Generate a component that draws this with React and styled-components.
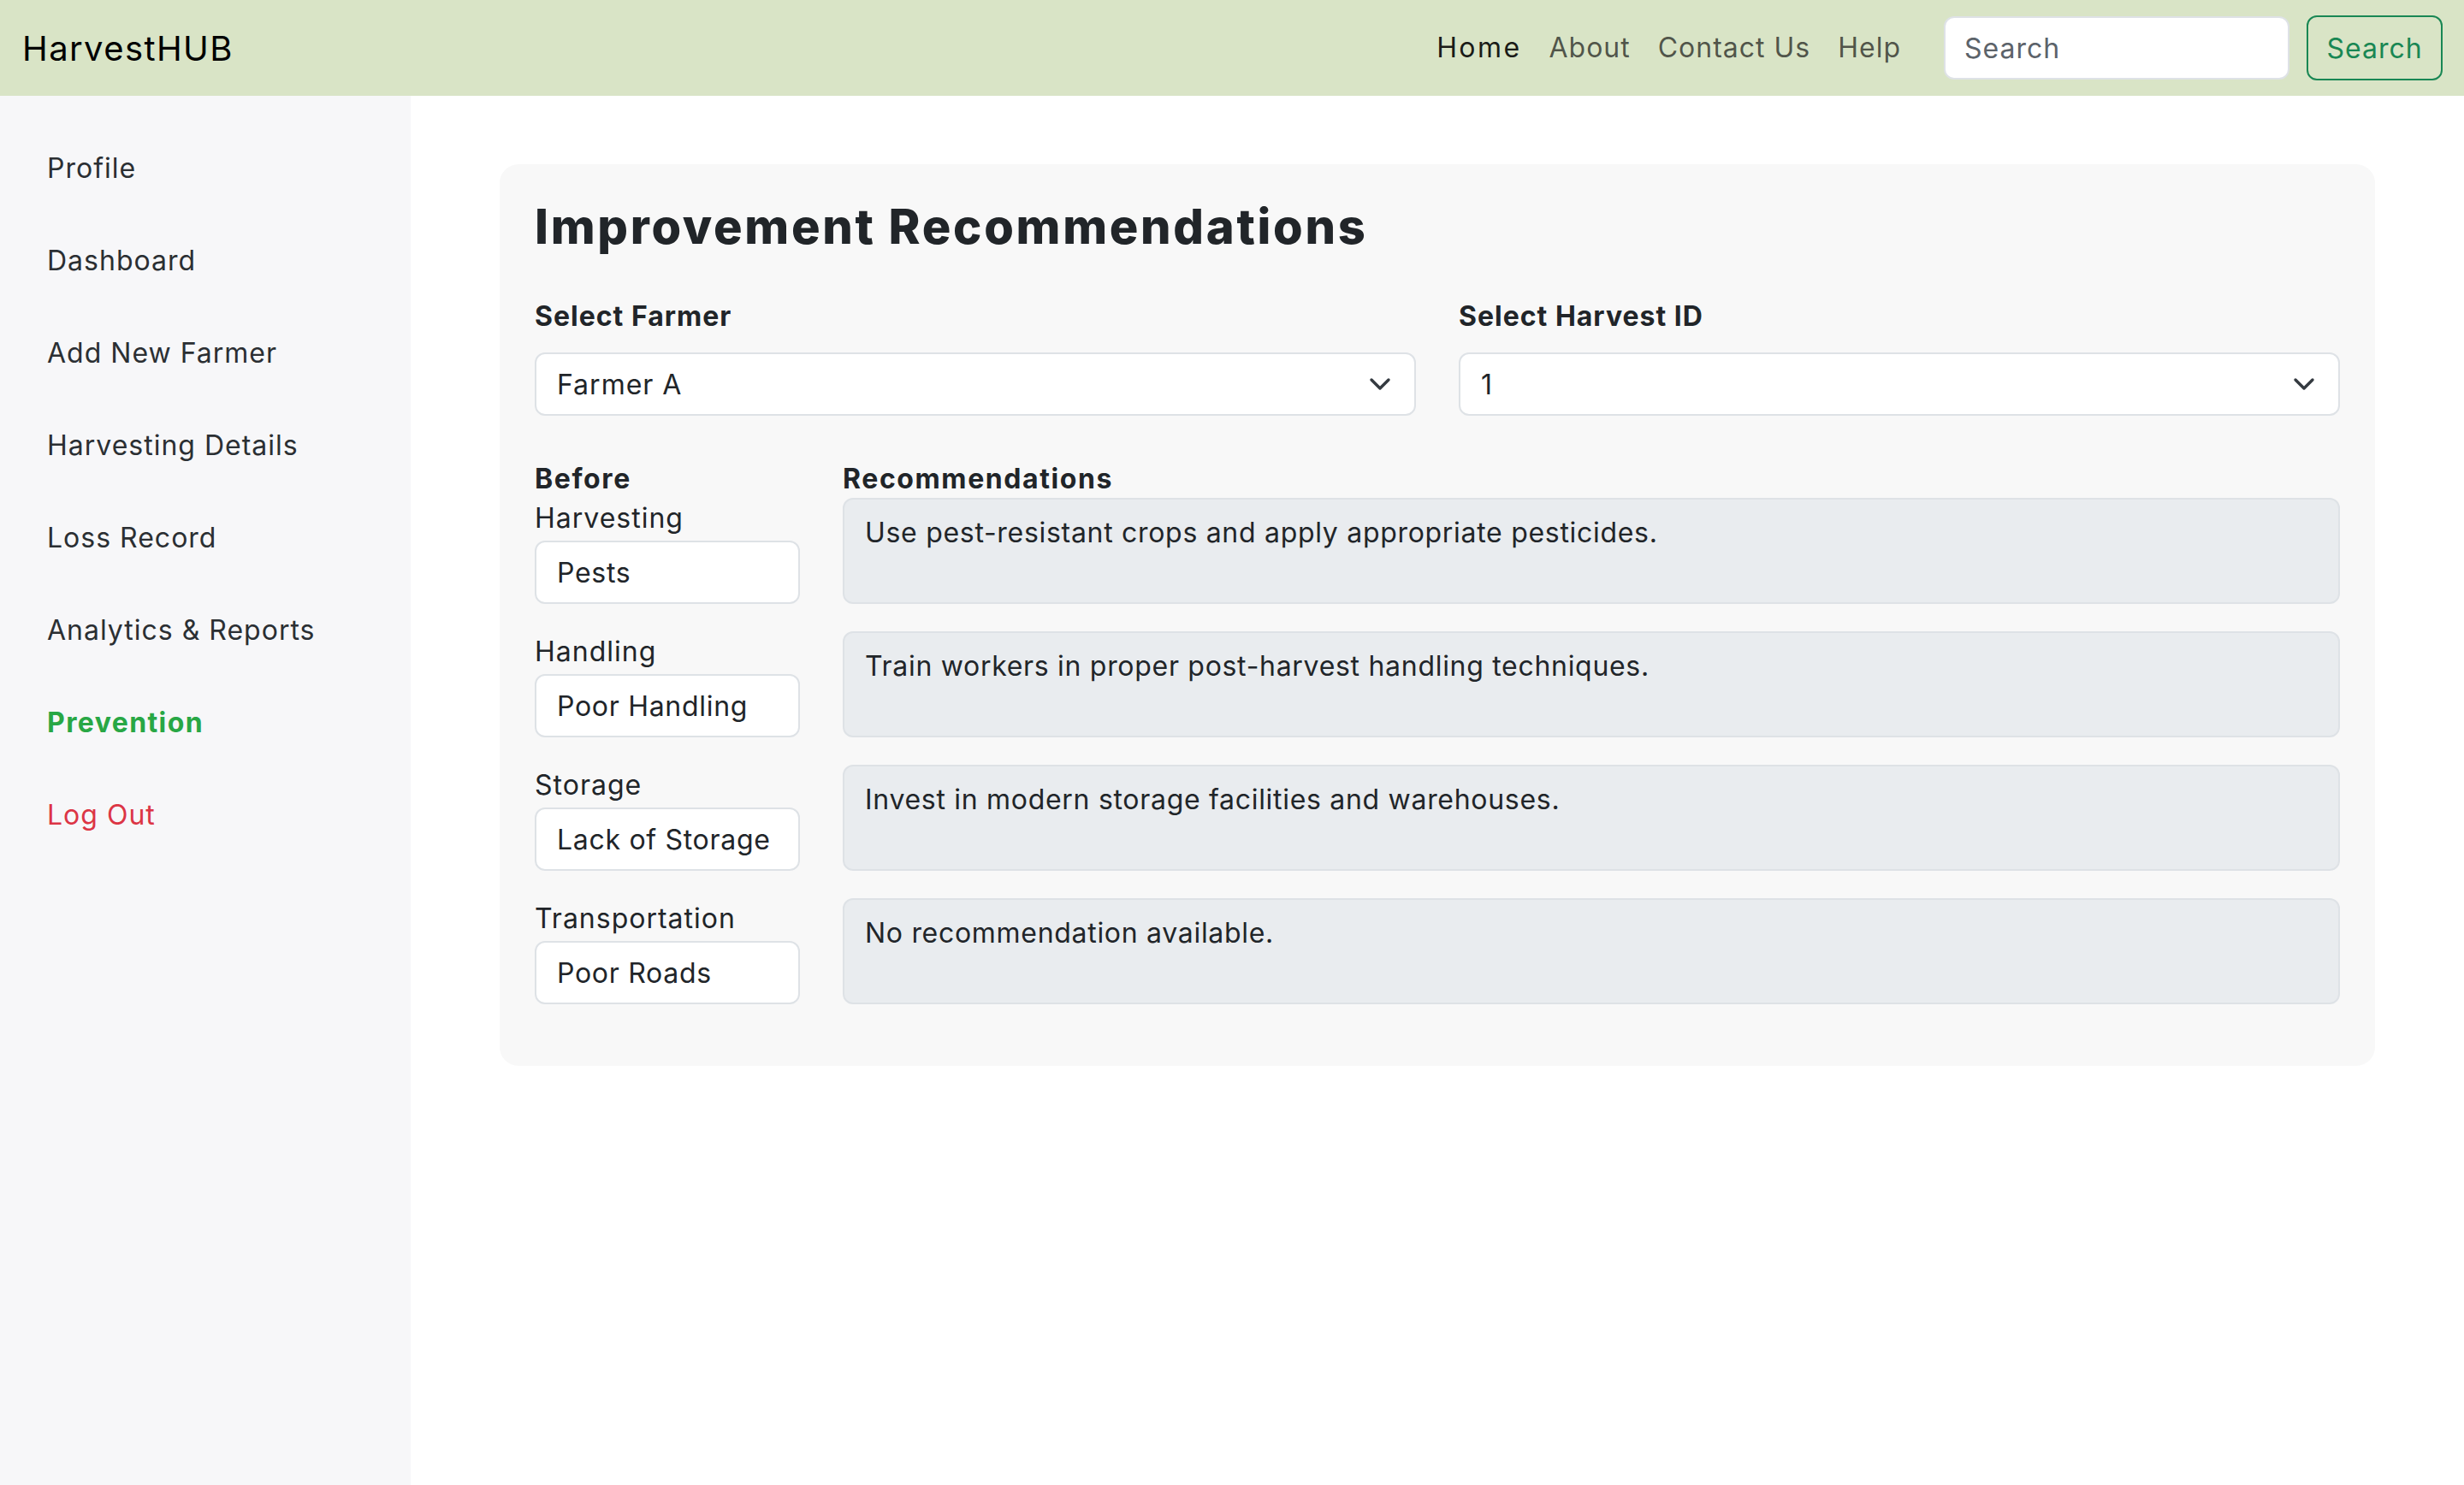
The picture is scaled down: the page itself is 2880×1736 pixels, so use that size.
import React from "react";
import styled, { createGlobalStyle } from "styled-components";

const GlobalStyle = createGlobalStyle`
  html, body { margin: 0; padding: 0; }
  body {
    font-family: Inter, "Open Sans", "Liberation Sans", sans-serif;
    color: #212529;
    background: #ffffff;
  }
  * { box-sizing: border-box; }
`;

const Page = styled.div`
  min-height: 100vh;
  display: flex;
  flex-direction: column;
`;

const Navbar = styled.header`
  height: 112px;
  flex: none;
  background: #d9e4c6;
  display: flex;
  align-items: center;
  justify-content: space-between;
  padding: 0 25px 0 26px;
`;

const Brand = styled.a`
  font-size: 40px;
  color: #000;
  text-decoration: none;
  letter-spacing: 1.4px;
`;

const NavRight = styled.div`
  display: flex;
  align-items: center;
`;

const NavList = styled.nav`
  display: flex;
  align-items: center;
`;

const NavLink = styled.a`
  font-size: 32px;
  line-height: 48px;
  padding: 0 16px;
  letter-spacing: ${(p) => (p.$active ? "2.4px" : "1px")};
  color: ${(p) => (p.$active ? "rgba(0,0,0,0.9)" : "rgba(0,0,0,0.65)")};
  text-decoration: none;
`;

const SearchForm = styled.form`
  display: flex;
  align-items: center;
  gap: 20px;
  margin-left: 34px;
`;

const SearchInput = styled.input`
  width: 404px;
  height: 74px;
  border: 2px solid #dee2e6;
  border-radius: 12px;
  background: #fff;
  padding: 0 22px;
  font-family: inherit;
  font-size: 32px;
  letter-spacing: 1px;
  color: #212529;
  outline: none;
  &::placeholder { color: #5c636a; }
`;

const OutlineButton = styled.button`
  height: 76px;
  width: 159px;
  border: 2px solid #198754;
  border-radius: 12px;
  background: transparent;
  color: #198754;
  font-family: inherit;
  font-size: 32px;
  letter-spacing: 1px;
  padding: 0;
`;

const Body = styled.div`
  flex: 1;
  display: flex;
`;

const Sidebar = styled.aside`
  width: 480px;
  flex: none;
  background: #f7f7f9;
  padding-top: 31px;
  display: flex;
  flex-direction: column;
`;

const SideItem = styled.a`
  display: block;
  padding: 30px 0 30px 55px;
  font-size: 32px;
  line-height: 48px;
  letter-spacing: ${(p) => (p.$active ? "1.4px" : "1px")};
  text-decoration: none;
  font-weight: ${(p) => (p.$active ? 700 : 400)};
  color: ${(p) =>
    p.$active ? "#28a745" : p.$danger ? "#dc3545" : "#2b2f33"};
`;

const Main = styled.main`
  flex: 1;
  padding: 80px 104px;
`;

const Card = styled.section`
  background: #f8f8f8;
  border-radius: 22px;
  padding: 40px 41px 72px;
`;

const Title = styled.h2`
  margin: 0 0 47px;
  font-size: 56px;
  line-height: 1.2;
  font-weight: 800;
  color: #212529;
  letter-spacing: 2.7px;
`;

const SelectRow = styled.div`
  display: grid;
  grid-template-columns: 1fr 1fr;
  column-gap: 50px;
  margin-bottom: 47px;
`;

const Field = styled.div`
  display: flex;
  flex-direction: column;
`;

const FieldLabel = styled.label`
  font-size: 32px;
  line-height: 48px;
  font-weight: 700;
  margin-bottom: 18px;
  letter-spacing: 1px;
`;

const SelectBox = styled.div`
  height: 74px;
  border: 2px solid #dee2e6;
  border-radius: 12px;
  background: #fff;
  display: flex;
  align-items: center;
  justify-content: space-between;
  padding: 0 24px 0 24px;
  font-size: 32px;
  letter-spacing: 1px;
  color: #212529;
`;

const Chevron = () => (
  <svg width="32" height="24" viewBox="0 0 16 12" aria-hidden="true">
    <path
      d="M3 3.5l5 5 5-5"
      fill="none"
      stroke="#343a40"
      strokeWidth="1.7"
      strokeLinecap="round"
      strokeLinejoin="round"
    />
  </svg>
);

const LossGrid = styled.div`
  display: grid;
  grid-template-columns: 310px 1fr;
  column-gap: 50px;
  row-gap: 32px;
`;

const ColHead = styled.div`
  font-size: 32px;
  line-height: 48px;
  font-weight: 700;
  letter-spacing: 1.6px;
  padding-top: 3px;
  margin-bottom: -34px;
`;

const Stage = styled.div`
  display: flex;
  flex-direction: column;
`;

const StageLabel = styled.div`
  font-size: 32px;
  line-height: 48px;
  letter-spacing: 1px;
  margin-bottom: 2px;
`;

const ValueBox = styled.div`
  height: 74px;
  border: 2px solid #dee2e6;
  border-radius: 12px;
  background: #fff;
  display: flex;
  align-items: center;
  padding: 0 24px;
  font-size: 32px;
  letter-spacing: 0.7px;
  color: #212529;
`;

const RecBox = styled.div`
  height: 124px;
  border: 2px solid #dee2e6;
  border-radius: 12px;
  background: #e9ecef;
  padding: 15px 24px 10px;
  font-size: 32px;
  line-height: 48px;
  letter-spacing: 0.7px;
  color: #212529;
`;

const navLinks = ["Home", "About", "Contact Us", "Help"];

const sideLinks = [
  { label: "Profile" },
  { label: "Dashboard" },
  { label: "Add New Farmer" },
  { label: "Harvesting Details" },
  { label: "Loss Record" },
  { label: "Analytics & Reports" },
  { label: "Prevention", active: true },
  { label: "Log Out", danger: true },
];

const stages = [
  {
    stage: "Harvesting",
    value: "Pests",
    rec: "Use pest-resistant crops and apply appropriate pesticides.",
  },
  {
    stage: "Handling",
    value: "Poor Handling",
    rec: "Train workers in proper post-harvest handling techniques.",
  },
  {
    stage: "Storage",
    value: "Lack of Storage",
    rec: "Invest in modern storage facilities and warehouses.",
  },
  {
    stage: "Transportation",
    value: "Poor Roads",
    rec: "No recommendation available.",
  },
];

export default function App() {
  return (
    <Page>
      <GlobalStyle />
      <Navbar>
        <Brand href="#">HarvestHUB</Brand>
        <NavRight>
          <NavList>
            {navLinks.map((l, i) => (
              <NavLink key={l} href="#" $active={i === 0}>
                {l}
              </NavLink>
            ))}
          </NavList>
          <SearchForm onSubmit={(e) => e.preventDefault()}>
            <SearchInput placeholder="Search" />
            <OutlineButton type="submit">Search</OutlineButton>
          </SearchForm>
        </NavRight>
      </Navbar>
      <Body>
        <Sidebar>
          {sideLinks.map((s) => (
            <SideItem
              key={s.label}
              href="#"
              $active={s.active}
              $danger={s.danger}
            >
              {s.label}
            </SideItem>
          ))}
        </Sidebar>
        <Main>
          <Card>
            <Title>Improvement Recommendations</Title>
            <SelectRow>
              <Field>
                <FieldLabel>Select Farmer</FieldLabel>
                <SelectBox>
                  <span>Farmer A</span>
                  <Chevron />
                </SelectBox>
              </Field>
              <Field>
                <FieldLabel>Select Harvest ID</FieldLabel>
                <SelectBox>
                  <span>1</span>
                  <Chevron />
                </SelectBox>
              </Field>
            </SelectRow>
            <LossGrid>
              <ColHead>Before</ColHead>
              <ColHead>Recommendations</ColHead>
              {stages.map((s) => (
                <React.Fragment key={s.stage}>
                  <Stage>
                    <StageLabel>{s.stage}</StageLabel>
                    <ValueBox>{s.value}</ValueBox>
                  </Stage>
                  <RecBox>{s.rec}</RecBox>
                </React.Fragment>
              ))}
            </LossGrid>
          </Card>
        </Main>
      </Body>
    </Page>
  );
}
